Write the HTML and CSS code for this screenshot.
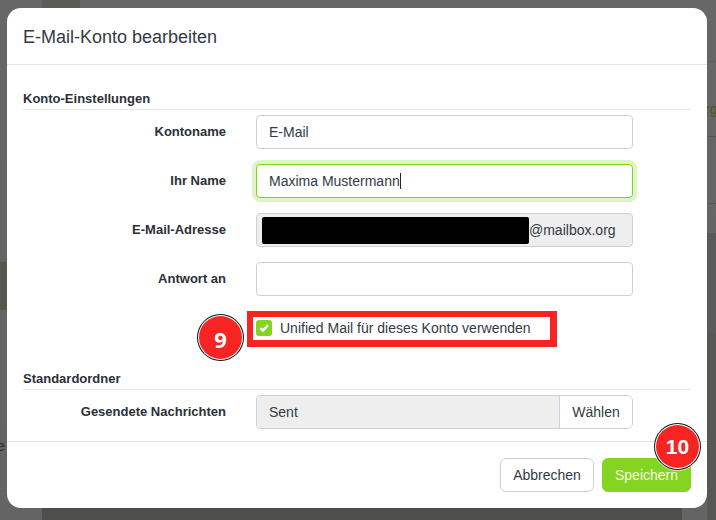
FILE: index.html
```html
<!DOCTYPE html>
<html lang="de">
<head>
<meta charset="utf-8">
<title>E-Mail-Konto bearbeiten</title>
<link rel="stylesheet" href="styles.css">
</head>
<body>
<div class="behind behind-e">e</div>
<div class="behind behind-rg">rg</div>
<main class="modal">
  <header class="modal-header"><h1>E-Mail-Konto bearbeiten</h1></header>
  <section class="modal-body">
    <h2 class="section-title">Konto-Einstellungen</h2>
    <div class="row"><label class="label">Kontoname</label><div class="input">E-Mail</div></div>
    <div class="row"><label class="label">Ihr Name</label><div class="input focused">Maxima Mustermann<span class="caret"></span></div></div>
    <div class="row"><label class="label">E-Mail-Adresse</label><div class="input readonly"><span class="redacted"></span>@mailbox.org</div></div>
    <div class="row"><label class="label">Antwort an</label><div class="input"></div></div>
    <div class="check-row">
      <span class="checkbox"><svg width="16" height="16" viewBox="0 0 16 16"><path d="M4.4 8.1 L7 10.6 L12 5.1" fill="none" stroke="#fff" stroke-width="2.4"/></svg></span>
      <span class="check-label">Unified Mail für dieses Konto verwenden</span>
    </div>
    <h2 class="section-title">Standardordner</h2>
    <div class="row"><label class="label">Gesendete Nachrichten</label>
      <div class="input-group"><div class="group-value">Sent</div><div class="group-button">Wählen</div></div>
    </div>
  </section>
  <footer class="modal-footer">
    <div class="btn btn-default">Abbrechen</div>
    <div class="btn btn-primary">Speichern</div>
  </footer>
  <div class="highlight"></div>
  <div class="badge badge-nine">9</div>
  <div class="badge badge-ten">10</div>
</main>
</body>
</html>
```
FILE: styles.css
```css
* { box-sizing: border-box; }
html, body { margin: 0; padding: 0; }
body {
  position: relative;
  width: 716px;
  height: 520px;
  overflow: hidden;
  font-family: "Liberation Sans", Arial, sans-serif;
  font-size: 14px;
  color: #333a44;
  background:
    linear-gradient(#55594d, #55594d) 0 262px / 7px 48px no-repeat,
    linear-gradient(#5b5b56, #5b5b56) 42px 0 / 38px 8px no-repeat,
    linear-gradient(#4e4e4c, #4e4e4c) 42px 508px / 640px 12px no-repeat,
    linear-gradient(#5f5f5f, #5f5f5f) 707px 61px / 9px 1px no-repeat,
    linear-gradient(#555, #555) 707px 136px / 9px 1px no-repeat,
    linear-gradient(#555, #555) 707px 203px / 9px 1px no-repeat,
    linear-gradient(#5a5a5a, #5a5a5a) 707px 233px / 9px 100px no-repeat,
    linear-gradient(#575755, #575755) 707px 333px / 9px 187px no-repeat,
    linear-gradient(#666, #646464);
}
.behind { position: absolute; font-size: 14px; line-height: 16px; }
.behind-e { left: -3px; top: 438px; color: #2c2f33; }
.behind-rg { left: 705px; top: 101px; color: #3f5a22; }

.modal {
  position: relative;
  display: flex;
  flex-direction: column;
  width: 700px;
  height: 500px;
  margin: 8px 0 0 7px;
  background: #fff;
  border-radius: 14px;
}
.modal-header {
  height: 57px;
  padding: 2px 16px 0;
  display: flex;
  align-items: center;
  border-bottom: 1px solid #e5e5e5;
}
.modal-header h1 {
  margin: 0;
  font-size: 18px;
  font-weight: 400;
  line-height: 24px;
}
.modal-body {
  height: 376px;
  padding: 23px 16px 0;
}
.section-title {
  margin: 0 0 5px;
  height: 22px;
  font-size: 13px;
  font-weight: 700;
  line-height: 18px;
  padding: 2px 0 1px;
  border-bottom: 1px solid #e5e5e5;
  color: #2b3038;
}
.row {
  display: flex;
  align-items: center;
  height: 34px;
  margin-bottom: 15px;
}
.label {
  width: 203px;
  margin-right: 30px;
  padding-bottom: 2px;
  text-align: right;
  font-size: 13px;
  font-weight: 700;
  flex: none;
  color: #2b3038;
}
.input {
  display: flex;
  align-items: center;
  width: 377px;
  height: 34px;
  padding: 0 12px;
  border: 1px solid #ccd1d9;
  border-radius: 4px;
  background: #fff;
}
.input.focused {
  border-color: #7fd11b;
  box-shadow: 0 0 0 4px #e0f5c6;
}
.caret {
  width: 1px;
  height: 16px;
  background: #1f2937;
}
.input.readonly {
  background: #eee;
  padding: 0 5px;
}
.redacted {
  width: 267px;
  height: 27px;
  background: #000;
  border-radius: 2px;
  flex: none;
}
.check-row {
  display: flex;
  align-items: center;
  height: 25px;
  padding-top: 9px;
  margin: 0 0 32px 233px;
}
.checkbox {
  width: 16px;
  height: 16px;
  margin-right: 8px;
  background: #84d422;
  border-radius: 3px;
  display: flex;
}
.input-group {
  display: flex;
  width: 377px;
  height: 34px;
  border: 1px solid #ccd1d9;
  border-radius: 4px 6px 6px 4px;
  overflow: hidden;
}
.group-value {
  flex: 1;
  display: flex;
  align-items: center;
  padding: 0 12px;
  background: #eee;
}
.group-button {
  width: 73px;
  display: flex;
  align-items: center;
  justify-content: center;
  background: #fff;
  border-left: 1px solid #ccd1d9;
}
.modal-footer {
  display: flex;
  justify-content: flex-end;
  gap: 8px;
  padding: 16px 16px 0;
  border-top: 1px solid #e5e5e5;
}
.btn {
  display: flex;
  align-items: center;
  justify-content: center;
  height: 34px;
  border-radius: 6px;
  border: 1px solid #ccd1d9;
}
.btn-default { width: 94px; background: #fff; }
.btn-primary { width: 89px; background: #84d422; border-color: #84d422; color: #f4fbe9; }
.highlight {
  position: absolute;
  left: 240px;
  top: 303px;
  width: 310px;
  height: 36px;
  border: solid #f72424;
  border-width: 6px 7px 7px 6px;
}
.badge {
  position: absolute;
  width: 43px;
  height: 43px;
  display: flex;
  align-items: center;
  justify-content: center;
  border-radius: 50%;
  background: #f72424;
  color: #fff;
  font-weight: 700;
  box-shadow: 0 0 0 1px #fff, 0 0 0 2px #111, 0 0 0 3px rgba(255,255,255,.55);
}
.badge-nine {
  left: 192px;
  top: 308px;
  padding-top: 3px;
  font-family: "Open Sans", sans-serif;
  font-size: 22px;
}
.badge-ten {
  left: 649px;
  top: 417px;
  padding-top: 1px;
  font-size: 21px;
}
```
